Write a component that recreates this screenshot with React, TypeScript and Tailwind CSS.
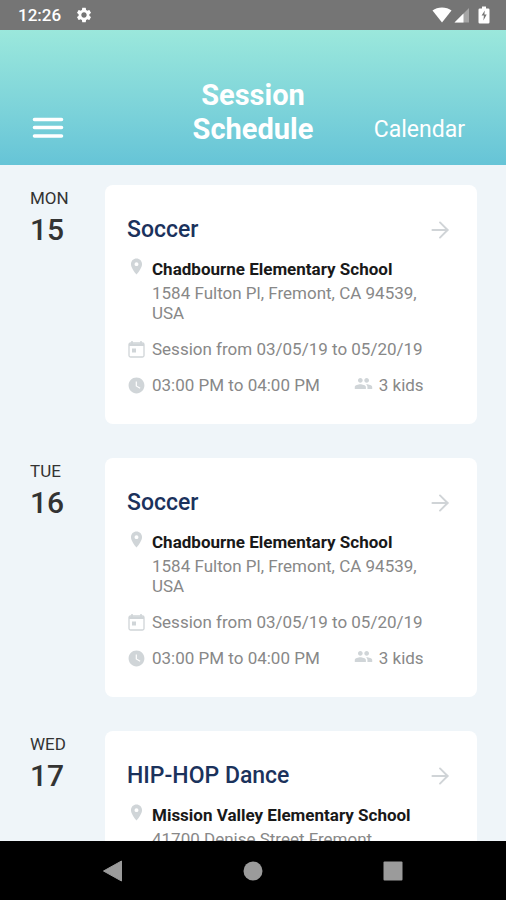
import { ArrowRight } from "lucide-react"
import { MdSettings, MdLocationOn, MdWatchLater, MdPeople } from "react-icons/md"

interface Session {
  day: string
  date: number
  title: string
  school: string
  address: string
  dates?: string
  time?: string
  kids?: string
}

const sessions: Session[] = [
  {
    day: "MON",
    date: 15,
    title: "Soccer",
    school: "Chadbourne Elementary School",
    address: "1584 Fulton Pl, Fremont, CA 94539, USA",
    dates: "Session from 03/05/19 to 05/20/19",
    time: "03:00 PM to 04:00 PM",
    kids: "3 kids",
  },
  {
    day: "TUE",
    date: 16,
    title: "Soccer",
    school: "Chadbourne Elementary School",
    address: "1584 Fulton Pl, Fremont, CA 94539, USA",
    dates: "Session from 03/05/19 to 05/20/19",
    time: "03:00 PM to 04:00 PM",
    kids: "3 kids",
  },
  {
    day: "WED",
    date: 17,
    title: "HIP-HOP Dance",
    school: "Mission Valley Elementary School",
    address: "41700 Denise Street Fremont",
  },
]

function StatusBar() {
  return (
    <div className="flex h-[30px] shrink-0 items-center justify-between bg-[#757575] pl-[18px] pr-4 text-white">
      <div className="flex items-center gap-[14px]">
        <span className="text-[17px] font-medium leading-5">12:26</span>
        <MdSettings className="h-[18px] w-[18px]" />
      </div>
      <div className="flex items-center">
        <svg viewBox="0 0 20 16" className="h-4 w-5" fill="currentColor">
          <path d="M0.5 3.6C3 1.6 6.4 0.5 10 0.5s7 1.1 9.5 3.1L10 15.5z" />
        </svg>
        <svg viewBox="0 0 16 16" className="ml-[2px] h-4 w-4" fill="currentColor">
          <path d="M0.5 15.5L15 1v14.5z" opacity="0.35" />
          <path d="M0.5 15.5L9.5 6.5v9z" />
        </svg>
        <svg viewBox="0 0 12 18" className="ml-2 h-[18px] w-3" fill="currentColor">
          <path
            fillRule="evenodd"
            d="M4 0.5h4v2h2.2q1.3 0 1.3 1.3v12.4q0 1.3-1.3 1.3H1.8q-1.3 0-1.3-1.3V3.8q0-1.3 1.3-1.3H4zM6.8 4.5L3.6 9.6h2.3L5.4 14.6L8.7 8.6H6.4z"
          />
        </svg>
      </div>
    </div>
  )
}

function Header() {
  return (
    <header className="grid h-[135px] shrink-0 grid-cols-3 items-end bg-gradient-to-b from-[#9be8dc] to-[#66c4d7] pb-[19px] text-white">
      <button aria-label="Menu" className="mb-[7px] ml-[32px] justify-self-start">
        <svg viewBox="0 0 32 22" className="h-[22px] w-8" stroke="currentColor" strokeWidth="3.6" strokeLinecap="round">
          <path d="M2.5 2.5h27M2.5 10.5h27M2.5 19h27" />
        </svg>
      </button>
      <h1 className="text-center text-[29px] font-bold leading-[34px]">Session Schedule</h1>
      <a href="#calendar" className="mr-[41px] justify-self-end text-[23px] leading-8">
        Calendar
      </a>
    </header>
  )
}

function CalendarIcon() {
  return (
    <svg viewBox="0 0 19 19" className="h-[19px] w-[19px] text-[#d0d5d8]" fill="none" stroke="currentColor">
      <rect x="2" y="3" width="15" height="14" rx="1.5" strokeWidth="1.3" />
      <path d="M2 4.8h15" strokeWidth="2.4" />
      <path d="M5 1v3M14 1v3" strokeWidth="1.5" />
      <rect x="5" y="8.5" width="4" height="4" fill="currentColor" stroke="none" />
    </svg>
  )
}

function SessionCard({ session }: { session: Session }) {
  return (
    <article className="min-w-0 flex-1 rounded-lg bg-white pb-[29px] pl-[22px] pr-6 pt-[31px]">
      <div className="flex items-center justify-between">
        <h2 className="text-[23px] font-medium leading-7 text-[#1b325c]">{session.title}</h2>
        <button aria-label="Open session">
          <ArrowRight className="h-[26px] w-[26px] text-[#d0d4d7]" strokeWidth={1.8} />
        </button>
      </div>

      <div className="mt-[15px] flex gap-[6px] text-[#888]">
        <MdLocationOn className="-mt-[2px] h-[19px] w-[19px] shrink-0 text-[#d0d5d8]" />
        <div className="text-[17px] leading-5">
          <h3 className="font-bold text-[#191919]">{session.school}</h3>
          <p className="mt-1">{session.address}</p>
        </div>
      </div>

      {session.dates && (
        <div className="mt-4 flex items-center gap-[6px] text-[17px] leading-5 text-[#888]">
          <CalendarIcon />
          <span>{session.dates}</span>
        </div>
      )}

      {session.time && (
        <div className="mt-4 flex items-center gap-[6px] text-[17px] leading-5 text-[#888]">
          <MdWatchLater className="h-[19px] w-[19px] text-[#d0d5d8]" />
          <span>{session.time}</span>
          <MdPeople className="-mt-1 ml-7 h-[19px] w-[19px] text-[#d0d5d8]" />
          <span>{session.kids}</span>
        </div>
      )}
    </article>
  )
}

function NavBar() {
  return (
    <nav className="flex h-[59px] shrink-0 items-center justify-center gap-[118px] bg-black text-[#9b9b9b]">
      <button aria-label="Back">
        <svg viewBox="0 0 22 22" className="h-[22px] w-[22px]" fill="currentColor">
          <path d="M1.5 11L19.5 1v20z" stroke="currentColor" strokeLinejoin="round" />
        </svg>
      </button>
      <button aria-label="Home">
        <svg viewBox="0 0 22 22" className="h-[22px] w-[22px]" fill="currentColor">
          <circle cx="11" cy="11" r="9.5" />
        </svg>
      </button>
      <button aria-label="Recent apps">
        <svg viewBox="0 0 22 22" className="h-[22px] w-[22px]" fill="currentColor">
          <rect x="1.5" y="1.5" width="19" height="19" rx="1" />
        </svg>
      </button>
    </nav>
  )
}

export default function App() {
  return (
    <div className="flex h-screen flex-col overflow-hidden bg-[#eff5f9] font-[Roboto,sans-serif]">
      <StatusBar />
      <Header />
      <main className="flex min-h-0 flex-1 flex-col gap-[34px] overflow-y-auto pl-[30px] pr-[29px] pt-5 [scrollbar-width:none]">
        {sessions.map((session) => (
          <section key={session.date} className="flex shrink-0">
            <div className="w-[75px] shrink-0 pt-[3px] text-[#333]">
              <div className="text-[17px] leading-5">{session.day}</div>
              <div className="mt-[5px] text-[30px] font-medium leading-[34px]">{session.date}</div>
            </div>
            <SessionCard session={session} />
          </section>
        ))}
      </main>
      <NavBar />
    </div>
  )
}
